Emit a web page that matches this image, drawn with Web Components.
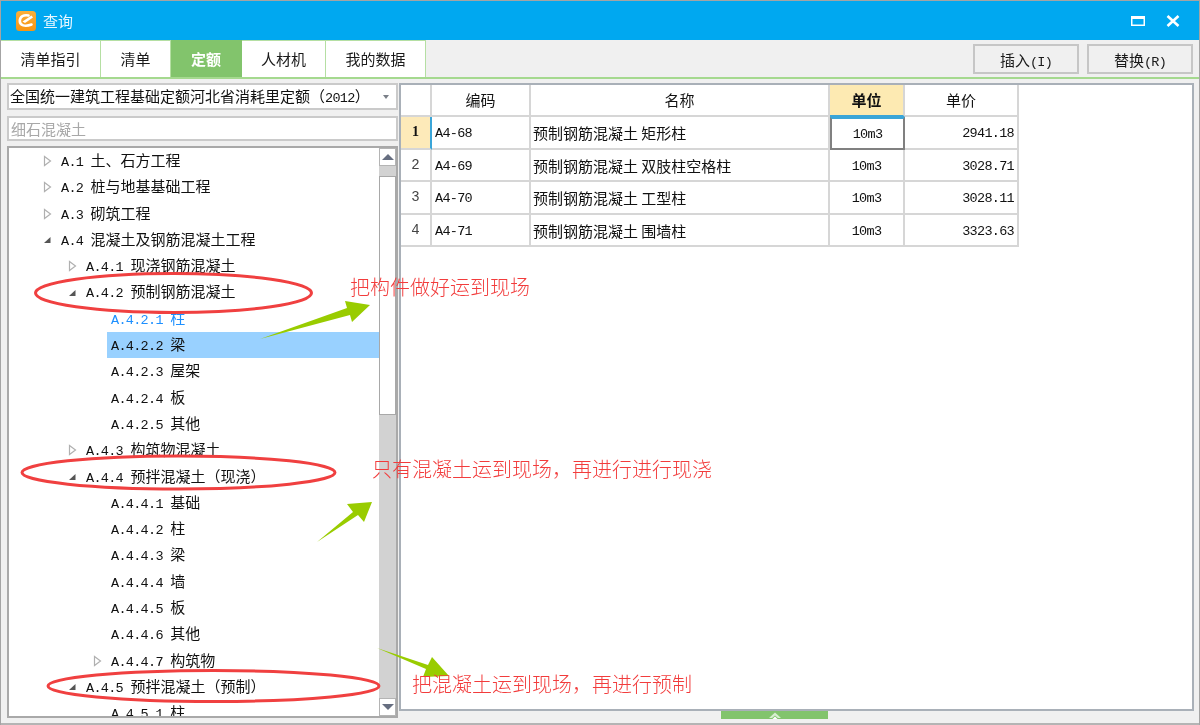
<!DOCTYPE html>
<html lang="zh">
<head>
<meta charset="utf-8">
<title>查询</title>
<style>
  html, body { margin: 0; padding: 0; background: #f0f0f0; }
  body { font-family: "Noto Sans CJK SC", "Liberation Sans", sans-serif; }
</style>
</head>
<body>
<qd-window>
  <qd-titlebar slot="title">查询</qd-titlebar>
  <qd-tabbar slot="tabs">
    <qd-tab style="--w:100px">清单指引</qd-tab>
    <qd-tab style="--w:70px">清单</qd-tab>
    <qd-tab style="--w:71px" active>定额</qd-tab>
    <qd-tab style="--w:84px">人材机</qd-tab>
    <qd-tab style="--w:100px">我的数据</qd-tab>
    <qd-button slot="actions">插入<span>(I)</span></qd-button>
    <qd-button slot="actions">替换<span>(R)</span></qd-button>
  </qd-tabbar>

  <qd-combo slot="left">全国统一建筑工程基础定额河北省消耗里定额<i>（</i><span>2012</span><i>）</i></qd-combo>
  <qd-search slot="left">细石混凝土</qd-search>
  <qd-tree slot="left">
    <qd-node level="0" state="closed" code="A.1">土、石方工程</qd-node>
    <qd-node level="0" state="closed" code="A.2">桩与地基基础工程</qd-node>
    <qd-node level="0" state="closed" code="A.3">砌筑工程</qd-node>
    <qd-node level="0" state="open" code="A.4">混凝土及钢筋混凝土工程</qd-node>
    <qd-node level="1" state="closed" code="A.4.1">现浇钢筋混凝土</qd-node>
    <qd-node level="1" state="open" code="A.4.2">预制钢筋混凝土</qd-node>
    <qd-node level="2" code="A.4.2.1" link>柱</qd-node>
    <qd-node level="2" code="A.4.2.2" selected>梁</qd-node>
    <qd-node level="2" code="A.4.2.3">屋架</qd-node>
    <qd-node level="2" code="A.4.2.4">板</qd-node>
    <qd-node level="2" code="A.4.2.5">其他</qd-node>
    <qd-node level="1" state="closed" code="A.4.3">构筑物混凝土</qd-node>
    <qd-node level="1" state="open" code="A.4.4">预拌混凝土<i>（</i>现浇<i>）</i></qd-node>
    <qd-node level="2" code="A.4.4.1">基础</qd-node>
    <qd-node level="2" code="A.4.4.2">柱</qd-node>
    <qd-node level="2" code="A.4.4.3">梁</qd-node>
    <qd-node level="2" code="A.4.4.4">墙</qd-node>
    <qd-node level="2" code="A.4.4.5">板</qd-node>
    <qd-node level="2" code="A.4.4.6">其他</qd-node>
    <qd-node level="2" state="closed" code="A.4.4.7">构筑物</qd-node>
    <qd-node level="1" state="open" code="A.4.5">预拌混凝土<i>（</i>预制<i>）</i></qd-node>
    <qd-node level="2" code="A.4.5.1">柱</qd-node>
  </qd-tree>

  <qd-grid slot="right">
    <qd-row head>
      <qd-cell kind="corner"></qd-cell>
      <qd-cell kind="title">编码</qd-cell>
      <qd-cell kind="title">名称</qd-cell>
      <qd-cell kind="title-on">单位</qd-cell>
      <qd-cell kind="title">单价</qd-cell>
    </qd-row>
    <qd-row>
      <qd-cell kind="num-on">1</qd-cell>
      <qd-cell kind="code">A4-68</qd-cell>
      <qd-cell kind="name">预制钢筋混凝土 矩形柱</qd-cell>
      <qd-cell kind="unit" current>10m3</qd-cell>
      <qd-cell kind="price">2941.18</qd-cell>
    </qd-row>
    <qd-row>
      <qd-cell kind="num">2</qd-cell>
      <qd-cell kind="code">A4-69</qd-cell>
      <qd-cell kind="name">预制钢筋混凝土 双肢柱空格柱</qd-cell>
      <qd-cell kind="unit">10m3</qd-cell>
      <qd-cell kind="price">3028.71</qd-cell>
    </qd-row>
    <qd-row>
      <qd-cell kind="num">3</qd-cell>
      <qd-cell kind="code">A4-70</qd-cell>
      <qd-cell kind="name">预制钢筋混凝土 工型柱</qd-cell>
      <qd-cell kind="unit">10m3</qd-cell>
      <qd-cell kind="price">3028.11</qd-cell>
    </qd-row>
    <qd-row>
      <qd-cell kind="num">4</qd-cell>
      <qd-cell kind="code">A4-71</qd-cell>
      <qd-cell kind="name">预制钢筋混凝土 围墙柱</qd-cell>
      <qd-cell kind="unit">10m3</qd-cell>
      <qd-cell kind="price">3323.63</qd-cell>
    </qd-row>
  </qd-grid>

  <qd-notes slot="notes"></qd-notes>
</qd-window>

<script>
(function() {
    const MONO = '"Liberation Mono", "Noto Sans CJK SC", monospace';
    const CJK = '"Noto Sans CJK SC", "Liberation Sans", sans-serif';
    // half width latin like the reference font: 7.4px per char
    const LATIN = `font-family: ${MONO}; font-size: 13.5px; letter-spacing: -.7px;`;
    // brackets and commas sit in the middle of their box in the reference
    const PUNCT = `font-family: "Noto Sans CJK TC", sans-serif; font-style: normal;`;

    //small helper, every element is the same few lines otherwise
    function define(name, html, extra) {
        const template = document.createElement("template");
        template.innerHTML = html;
        class El extends HTMLElement {
            constructor() {
                super();
                this._shadowRoot = this.attachShadow({mode: "open"});
                this._shadowRoot.appendChild(template.content.cloneNode(true));
            }
            connectedCallback() {
                if (extra) extra.call(this, this._shadowRoot);
            }
        }
        customElements.define(name, El);
    }

    define("qd-window", `
    <style>
      :host { display: flex; flex-direction: column; box-sizing: border-box; width: 1200px; height: 725px;
              position: relative; overflow: hidden; background: #f0f0f0; border: 1px solid #a4a4a4; border-bottom: 0;
              font-family: ${CJK}; filter: blur(.35px); }
      .body { flex: 1; display: flex; min-height: 0; border-bottom: 2px solid #b4b4b4; }
      .left { width: 392px; margin-left: 6px; padding-top: 4px; display: flex; flex-direction: column; }
      .right { width: 797px; padding-top: 4px; display: flex; flex-direction: column; }
      .grip { flex: none; width: 107px; height: 8px; margin-left: 322px; background: #82c46c; display: flex; justify-content: center; }
      .grip svg { display: block; }
    </style>
    <slot name="title"></slot>
    <slot name="tabs"></slot>
    <div class="body">
      <div class="left"><slot name="left"></slot></div>
      <div class="right"><slot name="right"></slot>
        <div class="grip"><svg width="14" height="8" viewBox="0 0 14 8"><path d="M1 7 L7 1.500 L13 7 L10 7 L7 4.500 L4 7 Z" fill="#d8efd0"/><path d="M4.500 8 L7 5.500 L9.500 8 Z" fill="#fff"/></svg></div>
      </div>
    </div>
    <slot name="notes"></slot>
    `);

    define("qd-titlebar", `
    <style>
      :host { display: flex; align-items: center; flex: none; height: 39px; background: #00a8f0; color: #e8f7ff; font-size: 15px; }
      .logo { margin-left: 15px; margin-right: 7px; display: block; }
      .title { flex: 1; line-height: 39px; }
      .btn { display: block; }
      .max { margin-right: 21px; }
      .close { margin-right: 19px; }
    </style>
    <svg class="logo" width="20" height="20" viewBox="0 0 20 20">
      <defs><linearGradient id="g" x1="0" y1="0" x2="0" y2="1"><stop offset="0" stop-color="#fbb03a"/><stop offset="1" stop-color="#f79412"/></linearGradient></defs>
      <rect width="20" height="20" rx="3.500" fill="url(#g)"/>
      <path d="M12.500 4.500 C8 3.500 3.800 5.500 3.800 10 C3.800 14.500 9 16 15.500 13.500" fill="none" stroke="#fff" stroke-width="2.600" stroke-linecap="round"/>
      <path d="M6.500 10.500 L15.500 4.500 L17 6.500 L9 12 Z" fill="#fff"/>
    </svg>
    <div class="title"><slot></slot></div>
    <svg class="btn max" width="14" height="10" viewBox="0 0 14 10"><rect x=".75" y=".75" width="12.500" height="8.500" fill="none" stroke="#fff" stroke-width="1.500"/><rect width="14" height="3" fill="#fff"/></svg>
    <svg class="btn close" width="14" height="12" viewBox="0 0 14 12"><path d="M1.500 1 L12.500 11 M12.500 1 L1.500 11" stroke="#fff" stroke-width="2.600"/></svg>
    `);

    define("qd-tabbar", `
    <style>
      :host { display: flex; flex: none; height: 39px; box-sizing: border-box; border-bottom: 2px solid #a5d98f; background: #f0f0f0; }
      .tabs { display: flex; flex: 1; }
      .actions { display: flex; gap: 8px; padding: 4px 6px 0 0; }
    </style>
    <div class="tabs"><slot></slot></div>
    <div class="actions"><slot name="actions"></slot></div>
    `);

    define("qd-tab", `
    <style>
      :host { display: block; box-sizing: border-box; width: var(--w); height: 37px; line-height: 36px; text-align: center;
              background: #fff; color: #1a1a1a; font-size: 15px; border-right: 1px solid #b5dfa3; border-top: 1px solid #b5dfa3; }
      :host([active]) { background: #82c46c; color: #fff; border-color: #82c46c; font-weight: 700; }
    </style>
    <slot></slot>
    `);

    define("qd-button", `
    <style>
      :host { display: block; box-sizing: border-box; width: 106px; height: 30px; line-height: 27px; text-align: center;
              background: #f0f0f0; border: 2px solid #c6c6c6; color: #1a1a1a; font-size: 15px; }
      ::slotted(span) { ${LATIN} }
    </style>
    <slot></slot>
    `);

    define("qd-combo", `
    <style>
      :host { display: flex; align-items: center; flex: none; box-sizing: border-box; width: 391px; height: 27px; background: #fff; border: 2px solid #cacaca;
              color: #111; font-size: 15px; padding-left: 1px; white-space: nowrap; }
      .text { flex: 1; line-height: 23px; }
      ::slotted(span) { ${LATIN} }
      ::slotted(i) { ${PUNCT} }
      .arrow { width: 0; height: 0; border: 3.500px solid transparent; border-top: 4px solid #7a7f88; border-bottom: 0; margin-right: 7px; }
    </style>
    <div class="text"><slot></slot></div><div class="arrow"></div>
    `);

    define("qd-search", `
    <style>
      :host { display: block; flex: none; box-sizing: border-box; width: 391px; height: 25px; margin-top: 6px; background: #fff; border: 2px solid #cacaca;
              color: #a8a8a8; font-size: 15px; line-height: 21px; padding-left: 2px; }
    </style>
    <slot></slot>
    `);

    define("qd-tree", `
    <style>
      :host { display: flex; flex: none; box-sizing: border-box; width: 391px; height: 572px; margin-top: 5px; background: #fff;
              border: 2px solid #a9a9a9; overflow: hidden; }
      .list { flex: 1; min-width: 0; overflow: hidden; }
      .bar { flex: none; width: 17px; background: #d2d2d2; display: flex; flex-direction: column; }
      .step { flex: none; height: 18px; box-sizing: border-box; background: #fff; border: 1px solid #b4b4b4; display: flex; align-items: center; justify-content: center; }
      .tri-up { width: 0; height: 0; border: 6px solid transparent; border-top: 0; border-bottom: 6px solid #666e80; }
      .tri-down { width: 0; height: 0; border: 6px solid transparent; border-bottom: 0; border-top: 6px solid #666e80; }
      .gap { flex: none; height: 10px; }
      .thumb { flex: none; height: 239px; box-sizing: border-box; background: #fff; border: 1px solid #a8a8a8; }
      .rest { flex: 1; }
    </style>
    <div class="list"><slot></slot></div>
    <div class="bar">
      <div class="step"><div class="tri-up"></div></div>
      <div class="gap"></div>
      <div class="thumb"></div>
      <div class="rest"></div>
      <div class="step"><div class="tri-down"></div></div>
    </div>
    `);

    define("qd-node", `
    <style>
      :host { display: flex; align-items: center; height: 26.300px; color: #111; white-space: nowrap; font-size: 15px; }
      .toggle { flex: none; width: 9px; height: 12px; margin-right: 5px; display: block; }
      .label { height: 26.300px; line-height: 24px; padding-left: 4px; flex: 1; }
      .code { ${LATIN} }
      ::slotted(i) { ${PUNCT} }
      :host([selected]) .label { background: #99d1ff; }
      :host([link]) { color: #1e90ff; }
    </style>
    <svg class="toggle" viewBox="0 0 9 12"></svg><div class="label"><span class="code"></span><slot></slot></div>
    `, function(root) {
        const level = Number(this.getAttribute("level"));
        const toggle = root.querySelector(".toggle");
        const state = this.getAttribute("state");
        // text starts 25px further in per level, the arrow stays just before it
        toggle.style.marginLeft = (34 + level * 25) + "px";
        if (state === "closed") toggle.innerHTML = '<path d="M1.500 1.500 L7.500 6 L1.500 10.500 Z" fill="#fff" stroke="#b0b0b0" stroke-width="1.200"/>';
        if (state === "open") toggle.innerHTML = '<path d="M7.500 3 L7.500 9 L1 9 Z" fill="#555"/>';
        root.querySelector(".code").textContent = this.getAttribute("code") + " ";
    });

    define("qd-grid", `
    <style>
      :host { display: block; flex: none; box-sizing: border-box; width: 795px; height: 628px; background: #fff;
              border: 2px solid #a9b0b8; --cols: 31px 99px 299px 75px 114px; }
    </style>
    <slot></slot>
    `);

    define("qd-row", `
    <style>
      :host { display: grid; grid-template-columns: var(--cols); grid-template-rows: 32.500px; height: 32.500px; --line: 30.500px; }
      :host([head]) { grid-template-rows: 32px; height: 32px; --line: 30px; }
    </style>
    <slot></slot>
    `);

    define("qd-cell", `
    <style>
      :host { display: block; box-sizing: border-box; min-width: 0; line-height: var(--line); text-align: left;
              border-right: 2px solid #d6d6d6; border-bottom: 2px solid #d6d6d6; color: #111; font-size: 15px; white-space: nowrap; }
      :host([kind="title"]), :host([kind="title-on"]), :host([kind="num"]), :host([kind="num-on"]), :host([kind="unit"]) { text-align: center; }
      :host([kind="title-on"]) { background: #fdeab2; font-weight: 700; border-bottom-color: #3aa5d8; }
      :host([kind="num-on"]) { background: #fdeab9; font-family: "Liberation Serif", serif; font-weight: 700; font-size: 14px; border-right-color: #3aa5d8; }
      :host([kind="num"]) { font-family: "Liberation Mono", monospace; font-size: 14px; color: #444; }
      :host([kind="code"]), :host([kind="unit"]), :host([kind="price"]) { ${LATIN} line-height: calc(var(--line) + 3px); }
      :host([kind="name"]) { line-height: calc(var(--line) + 2px); }
      :host([kind="code"]), :host([kind="name"]) { padding-left: 3px; }
      :host([kind="name"]) { padding-left: 2px; }
      :host([kind="price"]) { text-align: right; padding-right: 3px; }
      :host([current]) { border: 2px solid #808080; border-top-color: #3aa5d8; line-height: calc(var(--line) + 1px); }
    </style>
    <slot></slot>
    `);

    define("qd-notes", `
    <style>
      :host { display: block; position: absolute; left: -1px; top: -1px; width: 1200px; height: 725px; pointer-events: none; }
      svg { position: absolute; left: 0; top: 0; }
      .note { position: absolute; color: #f23c3c; font-size: 20px; line-height: 24px; white-space: nowrap; font-weight: 300; }
      .comma { ${PUNCT} }
    </style>
    <svg width="1200" height="725" viewBox="0 0 1200 725">
      <g fill="none" stroke="#f04040" stroke-width="3">
        <ellipse cx="173.500" cy="293" rx="138" ry="19.500"/>
        <ellipse cx="178.500" cy="472.500" rx="156.500" ry="16.500"/>
        <ellipse cx="213.500" cy="686" rx="165.500" ry="15.500"/>
      </g>
      <g fill="#99cc00">
        <polygon points="260,339 347,308 345,301 370,305 352,322 350,315"/>
        <polygon points="317,542 353,512 347,504 372,502 364,522 358,515"/>
        <polygon points="377,648 428,665 432,657 449,676 423,677 426,669"/>
      </g>
    </svg>
    <div class="note" style="left:350px;top:275px">把构件做好运到现场</div>
    <div class="note" style="left:372px;top:457px">只有混凝土运到现场<span class="comma">，</span>再进行进行现浇</div>
    <div class="note" style="left:412px;top:672px">把混凝土运到现场<span class="comma">，</span>再进行预制</div>
    `);
})();
</script>
</body>
</html>
